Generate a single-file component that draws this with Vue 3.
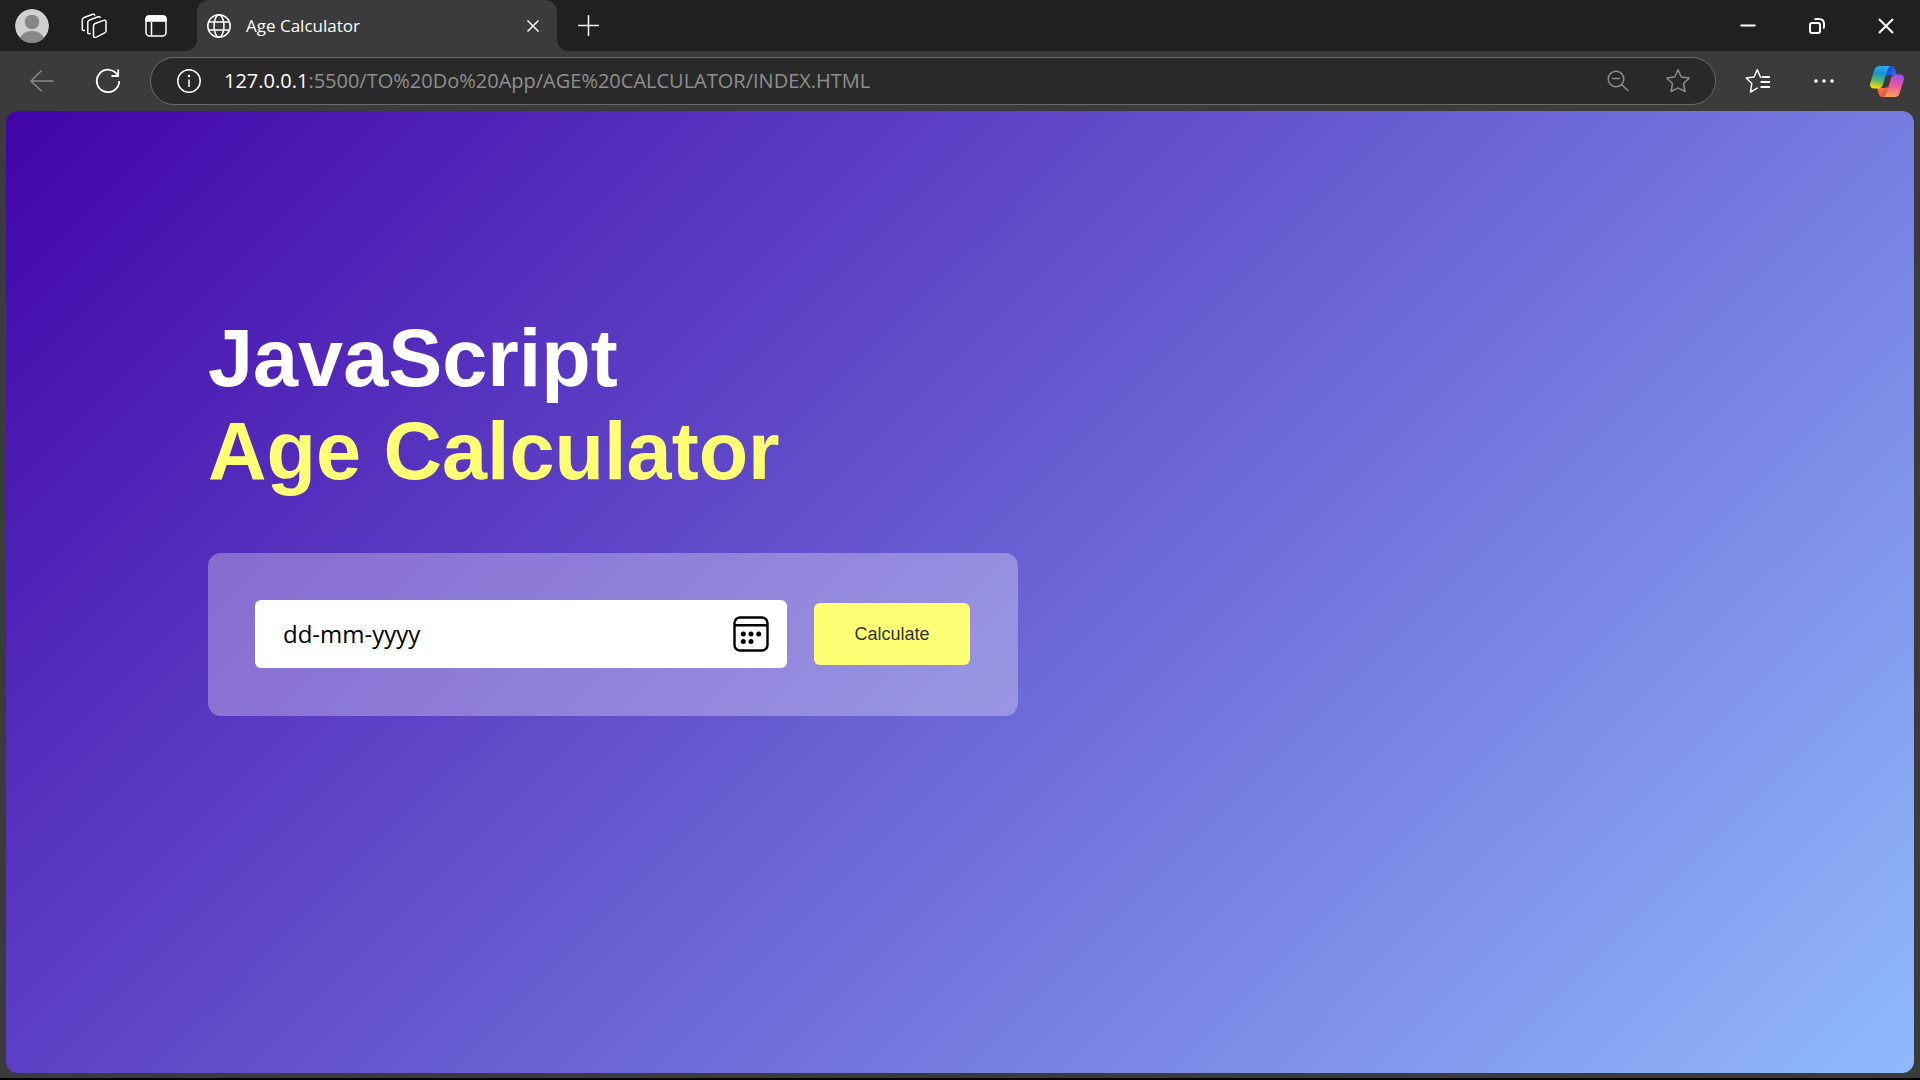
<script setup>
import { ref } from 'vue'

const address = ref(':5500/TO%20Do%20App/AGE%20CALCULATOR/INDEX.HTML')
const birthDate = ref('')
</script>

<template>
  <div class="window">
    <header class="tab-strip">
      <button class="cell" aria-label="Profile">
        <svg width="34" height="34" viewBox="0 0 34 34">
          <defs><clipPath id="avatar"><circle cx="17" cy="17" r="17" /></clipPath></defs>
          <g clip-path="url(#avatar)">
            <circle cx="17" cy="17" r="17" fill="#d2d0ce" />
            <circle cx="17" cy="13" r="7.3" fill="#8a8886" />
            <ellipse cx="17" cy="33" rx="13" ry="11" fill="#8a8886" />
          </g>
        </svg>
      </button>
      <button class="cell" aria-label="Workspaces">
        <svg class="line" width="26" height="26" viewBox="0 0 26 26">
          <path d="M13.5 10.8 22.6 7.4q2.4-.8 2.4 1.6v9q0 1.3-1.3 1.9l-8.3 4.2q-2.9.9-2.900-1.2v-9.700q0-1.700 1-2.400z" />
          <path d="M9.800 20.500 8.300 20.700q-1.500.2-1.500-1.300V9.200q0-1.300 1.200-1.900L17.200 3.800q2-.6 2.300 1.400" />
          <path d="M4 17.300 2.800 17.500q-1.500.2-1.500-1.300V6.700q0-1.300 1.200-1.900L11.700 1.300q2-.6 2.300 1.400" />
        </svg>
      </button>
      <button class="cell" aria-label="Tab actions">
        <svg class="line" width="22" height="22" viewBox="0 0 22 22">
          <rect x="1" y="1" width="20" height="20" rx="3.5" />
          <path d="M1 6V4q0-3 3-3h14q3 0 3 3v2z" fill="#fff" />
          <path d="M6.5 7v14" />
        </svg>
      </button>

      <div class="tab">
        <svg class="line" width="24" height="24" viewBox="0 0 24 24">
          <circle cx="12" cy="12" r="11.2" />
          <ellipse cx="12" cy="12" rx="5" ry="11.2" />
          <path d="M2 8h20M2 16h20" />
        </svg>
        <span class="tab-title">Age Calculator</span>
        <button class="tab-close" aria-label="Close tab">
          <svg class="line" width="14" height="14" viewBox="0 0 14 14"><path d="m1.5 1.5 11 11m0-11-11 11" /></svg>
        </button>
      </div>
      <button class="cell" aria-label="New tab">
        <svg class="line" width="22" height="22" viewBox="0 0 22 22"><path d="M11.5 0v21M1 10.500h21" /></svg>
      </button>

      <div class="window-controls">
        <button aria-label="Minimize">
          <svg width="16" height="16" viewBox="0 0 16 16"><path d="M.5 6.500h15v2H.5z" fill="#fff" /></svg>
        </button>
        <button aria-label="Restore">
          <svg class="bold" width="16" height="16" viewBox="0 0 16 16">
            <rect x="1" y="5" width="10" height="10" rx="2" />
            <path d="M5.5 1.5Q6 1 7.5 1H10q5 0 5 5v2.5q0 1.5-.8 2" />
          </svg>
        </button>
        <button aria-label="Close">
          <svg class="bold" width="16" height="16" viewBox="0 0 16 16"><path d="m1 1 14 14M15 1 1 15" /></svg>
        </button>
      </div>
    </header>

    <nav class="toolbar">
      <button class="tool dim" aria-label="Back">
        <svg class="line" width="24" height="22" viewBox="0 0 24 22"><path d="M23.5 11H1M11.5.8 1 11l10.5 10.2" /></svg>
      </button>
      <button class="tool" aria-label="Refresh">
        <svg class="line" width="26" height="26" viewBox="0 0 26 26">
          <path d="M22.8 7.5A11.2 11.2 0 1 0 24.2 13M16.500 8h6.700V1.500" stroke-width="1.8" />
        </svg>
      </button>

      <div class="address-bar">
        <button class="site-info" aria-label="Site information">
          <svg class="line" width="24" height="24" viewBox="0 0 24 24">
            <circle cx="12" cy="12" r="11.2" />
            <path d="M12 10.500V18" />
            <circle cx="12" cy="7" r="1.2" fill="#fff" stroke="none" />
          </svg>
        </button>
        <label class="host" for="address">127.0.0.1</label>
        <input id="address" v-model="address" class="path" type="text" spellcheck="false" />
        <button class="action dim" aria-label="Zoom out">
          <svg class="line" width="24" height="24" viewBox="0 0 24 24">
            <circle cx="10" cy="10" r="7.8" /><path d="M6 9.500h8M15.600 15.600 22.500 22" />
          </svg>
        </button>
        <button class="action dim" aria-label="Add to favorites">
          <svg class="line" width="26" height="26" viewBox="0 0 26 26">
            <path d="M13 1.8l3.300 7.200 8 1-5.800 5.500 1.500 8L13 19.900l-7 3.600 1.500-8L1.700 10l8-1z" />
          </svg>
        </button>
      </div>

      <button class="tool" aria-label="Favorites">
        <svg class="line" width="26" height="26" viewBox="0 0 26 26">
          <path d="M16.500 9.200 15.400 9 12.300 1.800 9 9l-7.800 1 5.600 5.500-1.300 8.500 7.200-4.100" />
          <path d="M17 9h8M15.500 14H25M15.500 19H25" stroke-width="1.8" />
        </svg>
      </button>
      <button class="tool" aria-label="Settings and more">
        <svg width="20" height="6" viewBox="0 0 20 6" fill="#fff">
          <circle cx="2" cy="3" r="1.8" /><circle cx="10" cy="3" r="1.8" /><circle cx="18" cy="3" r="1.8" />
        </svg>
      </button>
      <button class="tool copilot" aria-label="Copilot">
        <svg width="34" height="31" viewBox="0 0 34 31">
          <defs>
            <linearGradient id="cool" x1=".6" y1="0" x2=".4" y2="1">
              <stop offset="0" stop-color="#2fabf5" /><stop offset=".35" stop-color="#1496d4" />
              <stop offset=".65" stop-color="#55b56b" /><stop offset="1" stop-color="#fbd90a" />
            </linearGradient>
            <linearGradient id="warm" x1=".6" y1="0" x2=".4" y2="1">
              <stop offset="0" stop-color="#a24cf0" /><stop offset=".45" stop-color="#e8559f" />
              <stop offset="1" stop-color="#ffa35c" />
            </linearGradient>
            <linearGradient id="navy" x2="1" y2="1">
              <stop offset="0" stop-color="#1b3fc0" /><stop offset="1" stop-color="#2a7bea" />
            </linearGradient>
            <linearGradient id="ember" x2="1" y2="1">
              <stop offset="0" stop-color="#ff8a4a" /><stop offset="1" stop-color="#e03c3a" />
            </linearGradient>
          </defs>
          <path d="M16 0h6q2.500 0 3.500 4l1.200 5H21q-2.500 0-5 1z" fill="url(#navy)" />
          <path d="M18 31h-6q-2.500 0-3.500-4l-1.200-5H13q2.500 0 5-1z" fill="url(#ember)" />
          <path d="M9.500 0H21q-2.500.5-3.500 4L13 18.500q-1.200 4-5 4H4Q-.8 22.500.3 17L4.500 3.500Q5.500 0 9.500 0z" fill="url(#cool)" />
          <path d="M24.500 31H13q2.500-.5 3.500-4L21 12.500q1.200-4 5-4h4q4.800 0 3.700 5.500l-4.200 13.500q-1 3.500-5 3.500z" fill="url(#warm)" />
        </svg>
      </button>
    </nav>

    <main class="page">
      <section class="calculator">
        <h1>JavaScript<br /><span>Age Calculator</span></h1>
        <form class="panel" @submit.prevent>
          <div class="date-box">
            <input v-model="birthDate" type="text" placeholder="dd-mm-yyyy" aria-label="Date of birth" />
            <button class="picker" type="button" aria-label="Open calendar">
              <svg width="36" height="36" viewBox="0 0 36 36">
                <rect x="1.5" y="1.5" width="33" height="33" rx="5.5" fill="none" stroke="#000" stroke-width="2.4" />
                <path d="M1.5 9.2h33" stroke="#000" stroke-width="2.4" />
                <circle cx="10.3" cy="18" r="2.5" /><circle cx="18" cy="18" r="2.5" />
                <circle cx="25.7" cy="18" r="2.5" /><circle cx="10.3" cy="25.500" r="2.5" />
                <circle cx="18" cy="25.500" r="2.5" />
              </svg>
            </button>
          </div>
          <button class="calculate" type="submit">Calculate</button>
        </form>
      </section>
    </main>
  </div>
</template>

<style>
body {
  margin: 0;
  background: #3b3b3b;
}
</style>

<style scoped>
* {
  box-sizing: border-box;
}

button {
  display: flex;
  align-items: center;
  justify-content: center;
  flex-shrink: 0;
  margin: 0;
  padding: 0;
  border: 0;
  background: none;
}

.window {
  display: flex;
  flex-direction: column;
  min-height: 100vh;
  border-bottom: 2px solid #000;
  background: #3b3b3b;
  color: #fff;
  font-family: "Open Sans", "Noto Sans", sans-serif;
}

.line,
.bold {
  fill: none;
  stroke: #fff;
  stroke-width: 1.5;
  stroke-linejoin: round;
}

.bold {
  stroke-width: 2;
}

.dim .line {
  stroke: #8c8c8c;
}

.tab-strip {
  display: flex;
  height: 51px;
  padding-left: 1px;
  background: #202020;
}

.cell {
  width: 62px;
}

.tab {
  position: relative;
  display: flex;
  align-items: center;
  width: 360px;
  margin-left: 10px;
  padding: 0 12px 0 10px;
  border-radius: 12px 12px 0 0;
  background: #3b3b3b;
}

.tab::before,
.tab::after {
  content: "";
  position: absolute;
  bottom: 0;
  width: 10px;
  height: 10px;
}

.tab::before {
  right: 100%;
  background: radial-gradient(circle at 0 0, #202020 9px, #3b3b3b 10px);
}

.tab::after {
  left: 100%;
  background: radial-gradient(circle at 100% 0, #202020 9px, #3b3b3b 10px);
}

.tab-title {
  flex: 1;
  margin-left: 15px;
  font-size: 17px;
  line-height: 24px;
}

.tab-close {
  width: 24px;
  height: 24px;
}

.window-controls {
  display: flex;
  margin-left: auto;
}

.window-controls button {
  width: 69px;
}

.toolbar {
  display: flex;
  align-items: center;
  height: 60px;
  padding: 0 3px 0 9px;
}

.tool {
  width: 66px;
  height: 48px;
}

.copilot {
  width: 60px;
}

.address-bar {
  display: flex;
  flex: 1;
  align-items: center;
  height: 48px;
  margin: 0 9px;
  padding: 0 7px 0 13px;
  border: 1px solid #6a6a6a;
  border-radius: 24px;
  background: #292929;
  font-size: 20px;
  line-height: 28px;
}

.site-info {
  width: 50px;
  height: 40px;
  margin-right: 10px;
}

.path {
  flex: 1;
  min-width: 0;
  padding: 0;
  border: 0;
  outline: 0;
  background: none;
  color: #8f8f8f;
  font: inherit;
}

.action {
  width: 60px;
  height: 40px;
}

.page {
  flex: 1;
  margin: 0 6px 5px;
  padding: 201px 202px;
  border-radius: 12px;
  background: linear-gradient(135deg, #4203a9, #90bafc);
}

.calculator {
  max-width: 810px;
  font-family: "Liberation Sans", Arial, sans-serif;
}

h1 {
  margin: 0 0 55px;
  font-size: 81px;
  line-height: 93px;
  font-weight: 700;
}

h1 span {
  color: #ffff76;
}

.panel {
  display: flex;
  align-items: center;
  gap: 27px;
  padding: 47px 48px 48px 47px;
  border-radius: 13px;
  background: rgba(255, 255, 255, 0.3);
}

.date-box {
  display: flex;
  flex: 1;
  align-items: center;
  height: 68px;
  padding: 0 18px 0 28px;
  border-radius: 6px;
  background: #fff;
}

.date-box input {
  flex: 1;
  min-width: 0;
  padding: 0;
  border: 0;
  outline: 0;
  background: none;
  color: #000;
  font-family: "Open Sans", "Noto Sans", sans-serif;
  font-size: 24px;
  line-height: 32px;
}

.date-box input::placeholder {
  color: #000;
  opacity: 1;
}

.picker {
  width: 36px;
  height: 36px;
}

.calculate {
  width: 156px;
  height: 62px;
  border-radius: 6px;
  background: #ffff76;
  color: #333;
  font-family: inherit;
  font-size: 18px;
}
</style>
